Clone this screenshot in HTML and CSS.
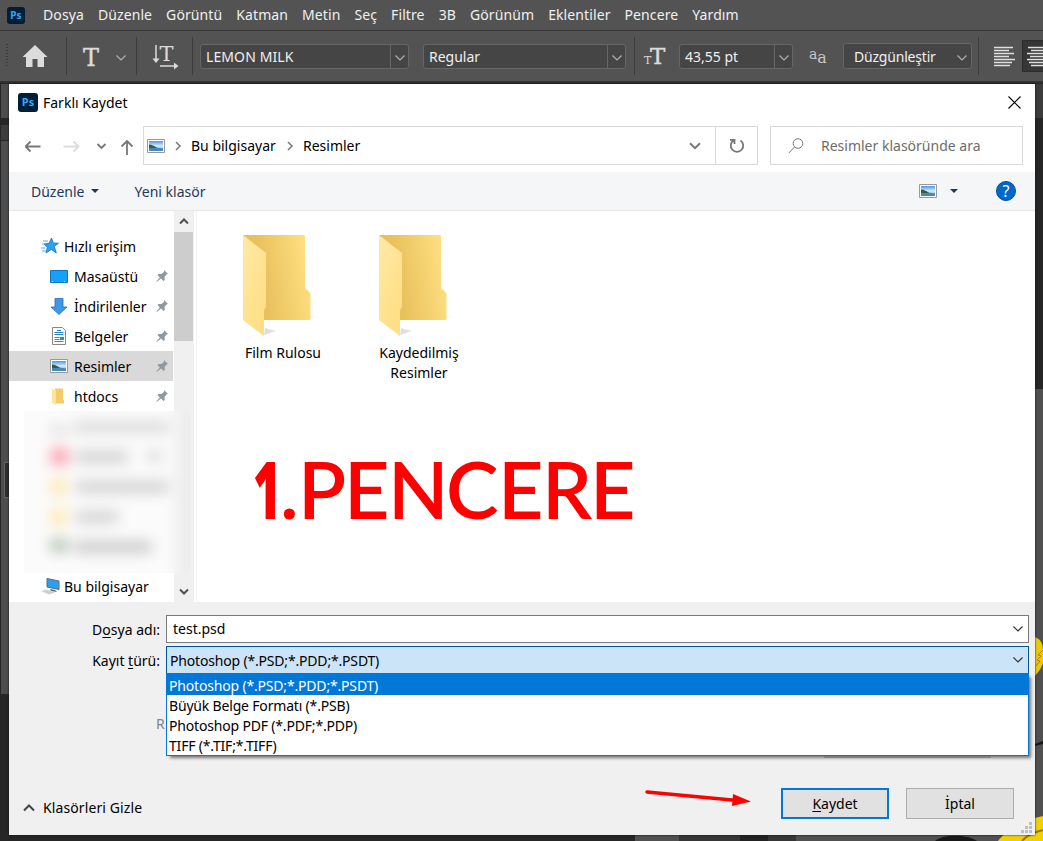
FILE: index.html
```html
<!DOCTYPE html>
<html lang="tr">

<head>
  <meta charset="utf-8" />
  <title>Farklı Kaydet</title>
  <meta name="viewport" content="width=device-width, initial-scale=1">
  <link rel="stylesheet" href="styles.css">
</head>

<body>
  <!-- shared icons -->
  <svg width="0" height="0" class="defs">
    <defs>
      <linearGradient id="back" x1="0" x2="1" y1="0.6" y2="0.4">
        <stop offset="0.3" stop-color="#e8c15c" />
        <stop offset="1" stop-color="#ffe082" />
      </linearGradient>
      <linearGradient id="front" x1="0" x2="0.6" y1="0" y2="1">
        <stop offset="0" stop-color="#ffe9a6" />
        <stop offset="1" stop-color="#ffdf85" />
      </linearGradient>
      <linearGradient id="shade" x1="0" x2="1" y1="0" y2="0">
        <stop offset="0" stop-color="#ddd" />
        <stop offset="1" stop-color="#fff" />
      </linearGradient>
      <linearGradient id="sky" x1="0" x2="0" y1="0" y2="1">
        <stop offset="0" stop-color="#4d94ec" />
        <stop offset="0.5" stop-color="#d8edfb" />
        <stop offset="1" stop-color="#5b96c2" />
      </linearGradient>
      <symbol id="folder" viewBox="0 0 80 104">
        <path d="M67 86l11-4-9-1zM22 101l12-4-11-3z" fill="url(#shade)" />
        <path d="M1 1h61l1 1v52l5.500 5v26l-1 1H22z" fill="url(#back)" />
        <path d="M1 1l23 18v54l-2 3v26L1 86z" fill="url(#front)" />
      </symbol>
      <symbol id="picture" viewBox="0 0 18 14">
        <path d="M.5.5h17v13H.5z" fill="#fff" stroke="#999" />
        <path d="M2 2h14v10H2z" fill="url(#sky)" />
        <path d="M2 6c3 0 5 1 7 2.500l7 1V12H2z" fill="#4a87b2" />
        <path d="M2 5.500c3 0 6 2 8 3.500H2z" fill="#2f6045" />
      </symbol>
      <symbol id="pin" viewBox="0 0 13 14">
        <path d="M8 1l4 4-1.500.5-2 2.500.3 3-1.300 1L5 9.500 1 12.800.3 12.500 3.800 8.500 1.500 6l1-1h3L8 2.800z" fill="#8d9aa3" />
      </symbol>
      <symbol id="chev" viewBox="0 0 12 8">
        <path d="M1.500 1.500L6 6l4.500-4.500" fill="none" stroke="currentColor" stroke-width="1.200" />
      </symbol>
      <symbol id="chev-bold" viewBox="0 0 12 8">
        <path d="M1 1.200l5 5 5-5" fill="none" stroke="currentColor" stroke-width="2" />
      </symbol>
    </defs>
  </svg>

  <div class="app">
    <div class="menubar">
      <span class="ps ps-small">Ps</span>
      <span>Dosya</span><span>Düzenle</span><span>Görüntü</span><span>Katman</span><span>Metin</span><span>Seç</span><span>Filtre</span><span>3B</span><span>Görünüm</span><span>Eklentiler</span><span>Pencere</span><span>Yardım</span>
    </div>

    <div class="options">
      <div class="grip"></div>
      <svg class="home" width="26" height="22" viewBox="0 0 26 22"><path d="M13 0l12.500 12H22v10h-6.500v-8h-5v8H4V12H.5z" fill="#dcdcdc" /></svg>
      <div class="sep"></div>
      <span class="type-tool">T</span>
      <svg class="chev" width="12" height="8"><use href="#chev" /></svg>
      <div class="sep"></div>
      <svg class="orient" width="28" height="26" viewBox="0 0 28 26">
        <path d="M4 1v15M8 22h16" stroke="#dcdcdc" stroke-width="1.500" />
        <path d="M.5 14.500h7L4 19zM22 18.500v7l4.500-3.500z" fill="#dcdcdc" />
        <text x="7.500" y="17" class="serif-t">T</text>
      </svg>
      <div class="sep"></div>
      <div class="field font-name"><span>LEMON MILK</span><i><svg width="12" height="8"><use href="#chev" /></svg></i></div>
      <div class="field font-style"><span>Regular</span><i><svg width="12" height="8"><use href="#chev" /></svg></i></div>
      <div class="sep"></div>
      <div class="size-icon"><small>T</small><b>T</b></div>
      <div class="field font-size"><span>43,55 pt</span><i><svg width="12" height="8"><use href="#chev" /></svg></i></div>
      <span class="aa"><sup>a</sup>a</span>
      <div class="field smooth"><span>Düzgünleştir</span><svg width="12" height="8"><use href="#chev" /></svg></div>
      <div class="sep"></div>
      <svg class="align" width="22" height="22"><path d="M0 1.500h19M0 4.500h15M0 7.500h20M0 10.500h15M0 13.500h21M0 16.500h18M0 19.500h16" stroke="#e0e0e0" stroke-width="1.300" /></svg>
      <div class="align-on"><svg width="22" height="22"><path d="M2 1.500h19M5 4.500h14M1 7.500h20M4 10.500h15M1 13.500h21M3 16.500h18M5 19.500h16" stroke="#e0e0e0" stroke-width="1.300" /></svg></div>
    </div>

    <!-- document area visible around the dialog -->
    <svg class="workspace" width="1043" height="758" viewBox="0 83 1043 758">
      <path d="M0 83h1043v758H0z" fill="#262626" />
      <path d="M1 84h8v34H1zM1 141h8v553H1z" fill="#4d4d4d" />
      <path d="M1 125h8v15H1z" fill="#3c3c3c" />
      <path d="M4.500 462.500h6v35h-6z" fill="#303030" stroke="#636363" />
      <path d="M1035 84h8v34h-8z" fill="#3c3c3c" />
      <path d="M1035 389h8v452h-8zM635 835h408v6H635z" fill="#505050" />
      <path d="M679 835h117v6H679z" fill="#363636" />
      <path d="M740 835h28v6h-28z" fill="#222" />
      <path d="M935 841c8-7 32-7 42 0z" fill="#181818" />
      <path d="M1035 637c7 3 8 8 8 14v12c-2 6-5 9-8 13z" fill="#edc900" />
      <path d="M1043 650l-5 5 3 1-4 4 3 1-4 5" fill="none" stroke="#a98700" />
      <path d="M1035 744l8-3v3l-8 2z" fill="#161616" />
      <path d="M998 841c8-11 26-21 45-25v25z" fill="#f0d000" />
      <path d="M1022 841c5-6 13-9 21-11" fill="none" stroke="#9b7500" stroke-width="2" />
    </svg>
  </div>

  <div class="dialog">
    <div class="titlebar">
      <span class="ps">Ps</span>
      <span class="title">Farklı Kaydet</span>
      <svg class="close" width="13" height="13"><path d="M.5.5l12 12M12.500.5l-12 12" stroke="#000" stroke-width="1.100" /></svg>
    </div>

    <div class="nav">
      <svg class="arrows" width="118" height="18" viewBox="1.500 0 118 18" fill="none" stroke="#777" stroke-width="1.800">
        <path d="M7 4.500L2 9.500l5 5M2 9.500h15" />
        <path d="M50 4.500l5 5-5 5M55 9.500H40" stroke="#dcdcdc" />
        <path d="M74 7l4 4 4-4" />
        <path d="M98 9.500l5.500-5.500 5.500 5.500M103.500 4v14" />
      </svg>
      <div class="address">
        <svg width="18" height="14"><use href="#picture" /></svg>
        <svg class="crumb" width="6" height="10"><path d="M1 1l4 4-4 4" fill="none" stroke="#777" stroke-width="1.500" /></svg>
        <span class="place">Bu bilgisayar</span>
        <svg class="crumb" width="6" height="10"><path d="M1 1l4 4-4 4" fill="none" stroke="#777" stroke-width="1.500" /></svg>
        <span class="current">Resimler</span>
        <svg class="drop" width="12" height="8"><use href="#chev-bold" /></svg>
        <div class="refresh"><svg width="16" height="16" viewBox="0 0 16 16"><path d="M11.500 2.500a6.200 6.200 0 1 1-7 0M1 1.800h4.500V6" fill="none" stroke="#777" stroke-width="1.800" /></svg></div>
      </div>
      <div class="search">
        <svg width="16" height="16" fill="none" stroke="#777"><circle cx="10" cy="5.500" r="4.800" /><path d="M6.500 9L.8 15" /></svg>
        <span>Resimler klasöründe ara</span>
      </div>
    </div>

    <div class="toolbar">
      <span class="organize">Düzenle</span>
      <i class="tri"></i>
      <span class="new-folder">Yeni klasör</span>
      <svg class="view" width="18" height="14"><use href="#picture" /></svg>
      <i class="tri"></i>
      <span class="help">?</span>
    </div>

    <div class="content">
      <div class="tree">
        <div class="row top">
          <svg width="18" height="16" viewBox="0 0 18 16"><path d="M10.500 0l1.700 5 5.300.2-4.200 3.300 2 6.500-5-3.500L5 15l1.300-5.500L3 6l5-.7z" fill="#2da0ef" stroke="#1672b8" stroke-width=".8" /><path d="M2 3h5M1 6h3M0 10h4M1 13h4" stroke="#56aee8" /></svg>
          <span>Hızlı erişim</span>
        </div>
        <div class="row"><svg width="18" height="13"><path d="M.5.5h17v12H.5z" fill="#14a0fb" stroke="#0a75c2" /><path d="M2 11.500h14" stroke="#bfe4ff" stroke-dasharray="1 11" /></svg><span>Masaüstü</span><svg class="pin" width="13" height="14"><use href="#pin" /></svg></div>
        <div class="row"><svg width="18" height="17"><path d="M5 .5h8V9h4l-8 7.500L1 9h4z" fill="#3e97e8" stroke="#2570b8" stroke-width=".8" /></svg><span>İndirilenler</span><svg class="pin" width="13" height="14"><use href="#pin" /></svg></div>
        <div class="row"><svg width="18" height="18"><path d="M2.500.5h10l3 3v14h-13z" fill="#fafafa" stroke="#888" /><path d="M7 3.500h4M4.500 5.500h9M4.500 7.500h9" stroke="#2486c8" /><path d="M4.500 10.500h5M4.500 12.500h5M4.500 14.500h9" stroke="#777" /><path d="M10 10h4v3h-4z" fill="#4184b4" /></svg><span>Belgeler</span><svg class="pin" width="13" height="14"><use href="#pin" /></svg></div>
        <div class="row selected"><svg width="18" height="14"><use href="#picture" /></svg><span>Resimler</span><svg class="pin" width="13" height="14"><use href="#pin" /></svg></div>
        <div class="row"><svg width="18" height="17" viewBox="0 0 18 17"><path d="M5 .5h8v11l1 1v3H5z" fill="#f2cc66" /><path d="M2 .5l4 2V17l-4-2z" fill="#ffe49a" /></svg><span>htdocs</span><svg class="pin" width="13" height="14"><use href="#pin" /></svg></div>
        <div class="row top computer">
          <svg width="19" height="17" viewBox="0 0 19 17"><path d="M6 .5l12 2.500v8.500L6 9z" fill="#27a1f5" stroke="#5a6d7b" /><path d="M9 11l5 1 2 2-6-1z" fill="#667" /><path d="M0 13l6-1.500 8 3L8 16.500z" fill="#ccd0d4" /></svg>
          <span>Bu bilgisayar</span>
        </div>
      </div>
      <div class="scrollbar">
        <svg width="10" height="7"><path d="M1 5.500l4-4 4 4" fill="none" stroke="#505050" stroke-width="2" /></svg>
        <div class="thumb"></div>
        <svg width="10" height="7"><path d="M1 1.500l4 4 4-4" fill="none" stroke="#505050" stroke-width="2" /></svg>
      </div>
      <div class="files">
        <div class="file"><svg width="80" height="104"><use href="#folder" /></svg><span>Film Rulosu</span></div>
        <div class="file"><svg width="80" height="104"><use href="#folder" /></svg><span>Kaydedilmiş Resimler</span></div>
      </div>

      <!-- censored folders -->
      <svg class="censored" width="166" height="162" viewBox="0 0 166 162">
        <defs><filter id="blur" x="-30%" y="-100%" width="160%" height="300%"><feGaussianBlur stdDeviation="7" /></filter></defs>
        <path d="M0 0h166v162H0z" fill="#fbfbfb" />
        <g filter="url(#blur)">
          <path d="M152 -20h40v200h-40z" fill="#ededed" />
          <path d="M50 10h95v12H50z" fill="#dcdcdc" />
          <path d="M26 15h18v8H26z" fill="#dadada" />
          <path d="M27 37h17v17H27z" fill="#ff9fae" />
          <path d="M51 40h53v12H51zM125 40h12v10h-12z" fill="#d2d2d2" />
          <path d="M27 67h15v17H27zM27 98h15v17H27z" fill="#ffe8b0" />
          <path d="M52 70h93v12H52zM52 100h42v12H52z" fill="#d2d2d2" />
          <path d="M26 128h18v13H26z" fill="#b4c2b2" />
          <path d="M50 130h78v12H50z" fill="#cacaca" />
        </g>
      </svg>

      <svg class="step-title" width="410" height="120">
        <text class="one" x="7" y="88" textLength="28" lengthAdjust="spacingAndGlyphs">1</text>
        <text y="88" x="34 52 98 142 200 252 296 344">.PENCERE</text>
      </svg>
    </div>

    <div class="footer">
      <div class="form-row">
        <label>D<u>o</u>sya adı:</label>
        <div class="input"><span>test.psd</span><svg width="12" height="8"><use href="#chev" /></svg></div>
      </div>
      <div class="form-row type-row">
        <label>Kayıt <u>t</u>ürü:</label>
        <div class="input select"><span>Photoshop (*.PSD;*.PDD;*.PSDT)</span><svg width="12" height="8"><use href="#chev" /></svg>
          <div class="dropdown">
            <div class="option active">Photoshop (*.PSD;*.PDD;*.PSDT)</div>
            <div class="option">Büyük Belge Formatı (*.PSB)</div>
            <div class="option">Photoshop PDF (*.PDF;*.PDP)</div>
            <div class="option">TIFF (*.TIF;*.TIFF)</div>
          </div>
        </div>
      </div>
      <div class="hidden-row"><span>R</span><i></i></div>
      <div class="actions">
        <svg width="12" height="8"><path d="M1 6.500l5-5 5 5" fill="none" stroke="#444" stroke-width="2" /></svg>
        <span class="hide">Klasörleri Gizle</span>
        <svg class="arrow" width="108" height="18"><path d="M3 4l85 8" stroke="red" stroke-width="3.500" stroke-linecap="round" /><path d="M89 6l18 7.500L88 18z" fill="red" /></svg>
        <button class="btn primary"><u>K</u>aydet</button>
        <button class="btn">İptal</button>
      </div>
      <svg class="resize" width="11" height="11" fill="#bfbfbf"><path d="M8 0h3v3H8zM4 4h3v3H4zM8 4h3v3H8zM0 8h3v3H0zM4 8h3v3H4zM8 8h3v3H8z" /></svg>
    </div>
  </div>
</body>

</html>
```

FILE: styles.css
```css
* {
  box-sizing: border-box;
}

body {
  margin: 0;
  width: 1043px;
  height: 841px;
  overflow: hidden;
  font-family: "Noto Sans", "Open Sans", sans-serif;
  font-size: 14px;
  line-height: 20px;
  color: #000;
  position: relative;
}

svg {
  display: block;
  flex: none;
}

span {
  white-space: nowrap;
}

.defs {
  position: absolute;
}

.app {
  display: flex;
  flex-direction: column;
  height: 841px;
  background: #535353;
}

.menubar {
  display: flex;
  align-items: center;
  gap: 14px;
  height: 30px;
  padding-left: 7px;
  letter-spacing: .1px;
  color: #f0f0f0;
}

.ps {
  width: 20px;
  height: 19px;
  border-radius: 3px;
  background: #001e36;
  color: #31a8ff;
  font-size: 11px;
  font-weight: bold;
  line-height: 18px;
  text-align: center;
}

.ps-small {
  width: 18px;
  height: 17px;
  font-size: 10px;
  line-height: 16px;
  margin-right: 4px;
}

.options {
  display: flex;
  align-items: center;
  height: 53px;
  border-top: 1px solid #383838;
  border-bottom: 2px solid #333;
  color: #f0f0f0;
  overflow: hidden;
}

.options > * {
  flex: none;
}

.options .sep {
  width: 1px;
  height: 38px;
  background: #3d3d3d;
}

.grip {
  width: 2px;
  height: 24px;
  margin: 0 14px 0 6px;
  background: repeating-linear-gradient(#3c3c3c 0 1px, #535353 1px 3px);
}

.home {
  margin-right: 18px;
}

.type-tool {
  width: 20px;
  margin: 3px 14px 0 14px;
  font: 24px/30px "DejaVu Serif", serif;
  text-align: center;
  -webkit-text-stroke: .4px #dcdcdc;
  color: #dcdcdc;
}

.options .chev,
.field {
  color: #b0b0b0;
}

.options .chev {
  margin-right: 9px;
  margin-top: 4px;
}

.orient {
  margin: 2px 12px 0 15px;
}

.serif-t {
  font: 21px "DejaVu Serif", serif;
  fill: #dcdcdc;
}

.field {
  display: flex;
  align-items: center;
  height: 25px;
  background: #454545;
  border: 1px solid #666;
  border-radius: 3px;
}

.field span {
  flex: 1;
  padding: 1px 0 0 5px;
  color: #f0f0f0;
}

.field i {
  display: flex;
  align-items: center;
  justify-content: center;
  width: 18px;
  height: 23px;
  padding-top: 4px;
  border-left: 1px solid #666;
}

.font-name {
  width: 209px;
  margin-left: 7px;
}

.font-name span {
  letter-spacing: .1px;
}

.font-style {
  width: 203px;
  margin: 0 8px 0 14px;
}

.size-icon {
  display: flex;
  align-items: baseline;
  width: 34px;
  margin-top: 4px;
  padding-left: 9px;
  font: 23px/28px "DejaVu Serif", serif;
  color: #dcdcdc;
}

.size-icon b {
  font-weight: normal;
  -webkit-text-stroke: .4px #dcdcdc;
}

.size-icon small {
  width: 6px;
  font-size: 11px;
}

.font-size {
  width: 114px;
  margin-left: 10px;
}

.aa {
  width: 18px;
  margin: 3px 16px 0;
  font: 16px/20px "DejaVu Serif", serif;
  color: #c8c8c8;
}

.aa sup {
  font-size: 14px;
  line-height: 0;
  vertical-align: 4px;
}

.smooth {
  width: 129px;
  height: 26px;
  margin-right: 6px;
  padding-right: 3px;
}

.smooth span {
  padding-left: 10px;
  letter-spacing: -.2px;
}

.smooth svg {
  margin-top: 4px;
}

.align {
  margin: 2px 6px 0 15px;
}

.align-on {
  width: 26px;
  height: 32px;
  padding: 5px 3px;
  background: #363636;
  border: 1px solid #2c2c2c;
}

.workspace {
  flex: none;
}

.dialog {
  position: absolute;
  left: 9px;
  top: 84px;
  width: 1026px;
  height: 751px;
  display: flex;
  flex-direction: column;
  background: #fff;
  box-shadow: 0 0 2px #111;
}

.titlebar {
  display: flex;
  align-items: center;
  height: 36px;
  padding-left: 9px;
}

.title {
  flex: 1;
  padding: 2px 0 0 5px;
}

.close {
  margin-right: 14px;
}

.nav {
  display: flex;
  align-items: center;
  height: 52px;
  padding: 0 12px 1px 16px;
}

.address {
  display: flex;
  align-items: center;
  width: 615px;
  height: 39px;
  padding-left: 3px;
  margin-right: 12px;
  border: 1px solid #d9d9d9;
}

.crumb {
  margin: 0 10px;
}

.place {
  width: 86px;
}

.drop {
  margin-left: auto;
  margin-right: 14px;
  color: #777;
}

.refresh {
  display: flex;
  align-items: center;
  justify-content: center;
  width: 42px;
  height: 37px;
  border-left: 1px solid #d9d9d9;
}

.search {
  display: flex;
  align-items: center;
  gap: 17px;
  width: 253px;
  height: 39px;
  padding-left: 17px;
  border: 1px solid #d9d9d9;
  color: #6d6d6d;
}

.toolbar {
  display: flex;
  align-items: center;
  height: 39px;
  padding: 0 19px 0 22px;
  background: #f5f6f7;
  border-bottom: 1px solid #e6e8ea;
  color: #1e395b;
}

.organize,
.new-folder {
  padding-top: 2px;
}

.tri {
  border: 4px solid transparent;
  border-top-color: #1e395b;
  border-bottom: 0;
  margin-left: 6px;
}

.new-folder {
  margin-left: 36px;
}

.view {
  margin-left: auto;
  margin-right: 7px;
}

.help {
  width: 20px;
  height: 20px;
  margin-left: 38px;
  border: 1px solid #004f9c;
  border-radius: 50%;
  background: #0068c9;
  color: #fff;
  font-size: 16px;
  line-height: 18px;
  text-align: center;
}

.content {
  display: flex;
  position: relative;
  height: 391px;
}

.tree {
  width: 164px;
  padding-top: 20px;
}

.row {
  display: flex;
  align-items: center;
  gap: 6px;
  height: 30px;
  padding: 0 4px 0 41px;
}

.row span {
  padding-top: 2px;
}

.row.top {
  padding-left: 32px;
  gap: 5px;
}

.row.selected {
  background: #d9d9d9;
}

.row .pin {
  margin-left: auto;
}

.row.computer {
  margin-top: 160px;
  gap: 4px;
}

.scrollbar {
  display: flex;
  flex-direction: column;
  align-items: center;
  width: 20px;
  margin-left: 1px;
  padding: 7px 1px 7px 0;
  background: #f0f0f0;
}

.thumb {
  width: 19px;
  height: 109px;
  margin: 7px 0 auto 0;
  background: #cdcdcd;
}

.files {
  display: flex;
  flex: 1;
  margin-left: 2px;
  padding: 23px 0 0 36px;
  border-left: 1px solid #f3f3f3;
}

.file {
  display: flex;
  flex-direction: column;
  align-items: center;
  width: 100px;
  margin-right: 36px;
}

.file svg {
  margin-right: 2px;
  margin-bottom: 5px;
}

.file span {
  white-space: normal;
  text-align: center;
}

.censored {
  position: absolute;
  left: 15px;
  top: 200px;
}

.step-title {
  position: absolute;
  left: 237px;
  top: 220px;
  font: 600 79px Lato, sans-serif;
  fill: #f00;
}

.step-title .one {
  font-family: "Open Sans", sans-serif;
  font-weight: 800;
}

.footer {
  flex: 1;
  position: relative;
  padding: 13px 6px 0 0;
  background: #f0f0f0;
}

.form-row {
  display: flex;
  align-items: center;
}

.form-row label {
  width: 151px;
  margin-right: 6px;
  padding-top: 2px;
  text-align: right;
}

u {
  text-underline-offset: 2px;
}

.input {
  flex: 1;
  display: flex;
  align-items: center;
  justify-content: space-between;
  height: 28px;
  padding: 0 4px 0 6px;
  border: 1px solid #7a7a7a;
  background: #fff;
  color: #333;
}

.input span,
.option {
  color: #000;
}

.type-row {
  margin-top: 3px;
}

.select {
  position: relative;
  padding-left: 3px;
  letter-spacing: -.18px;
  background: #cce4f7;
  border-color: #005499;
}

.select > span {
  padding-top: 2px;
}

.dropdown {
  position: absolute;
  left: -1px;
  top: 26px;
  width: 863px;
  height: 83px;
  border: 1px solid #0078d7;
  background: #fff;
  box-shadow: 3px 3px 3px -1px #777;
}

.option {
  height: 20px;
  padding-left: 2px;
  line-height: 21px;
}

.option.active {
  height: 21px;
  line-height: 23px;
  color: #fff;
  background: #0078d7;
}

.hidden-row {
  display: flex;
  align-items: center;
  height: 67px;
  margin-top: 17px;
  padding: 0 38px 0 147px;
  color: #838383;
}

.hidden-row span {
  margin-top: -2px;
}

.hidden-row i {
  align-self: flex-end;
  width: 167px;
  height: 2px;
  margin: 0 0 0 auto;
  background: #999;
}

.actions {
  display: flex;
  align-items: center;
  height: 31px;
  margin-top: 30px;
  padding: 0 15px 0 14px;
}

.hide {
  flex: 1;
  padding: 8px 0 0 8px;
  letter-spacing: .1px;
}

.actions > svg:first-child {
  margin-top: 8px;
}

.arrow {
  margin-right: 29px;
  margin-top: -14px;
}

.btn {
  width: 108px;
  height: 31px;
  padding: 0;
  border: 1px solid #adadad;
  background: #e1e1e1;
  color: #000;
  font: inherit;
}

.btn.primary {
  margin-right: 17px;
  border: 2px solid #0078d7;
}

.resize {
  position: absolute;
  right: 3px;
  bottom: 2px;
}
```
